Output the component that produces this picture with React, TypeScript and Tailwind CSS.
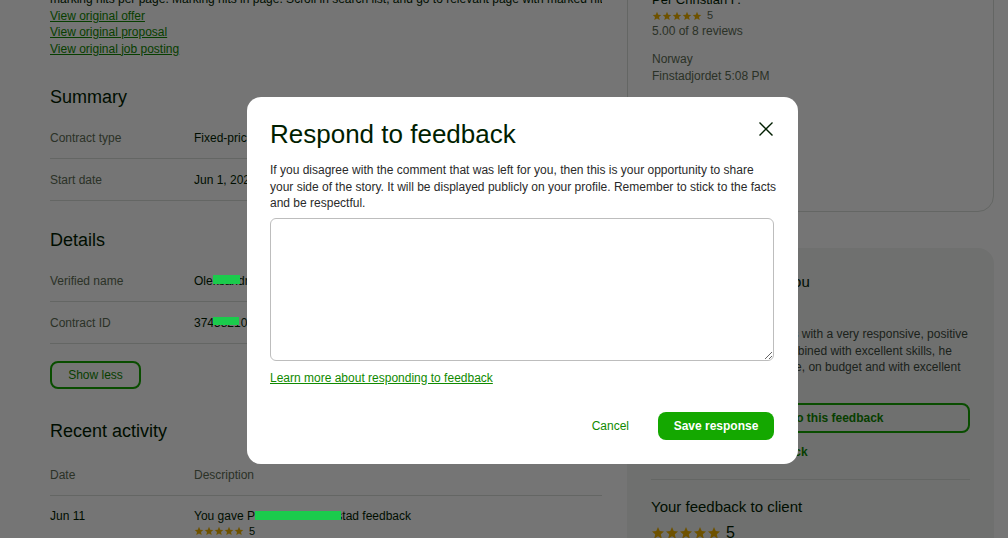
function Star({ size }: { size: number }) {
  return (
    <svg width={size} height={size} viewBox="0 0 24 24" className="shrink-0">
      <path d="M12 1.8l3 6.9 7.3.7-5.5 4.9 1.7 7.2L12 17.7l-6.5 3.8 1.7-7.2L1.7 9.4 9 8.7z" fill="currentColor" />
    </svg>
  )
}

function Stars({ size, score, textClass }: { size: number; score: string; textClass: string }) {
  return (
    <div className="flex items-center gap-[5px]">
      <div className="flex items-center text-[#f0b400]">
        {[0, 1, 2, 3, 4].map(i => (
          <Star key={i} size={size} />
        ))}
      </div>
      <span className={textClass}>{score}</span>
    </div>
  )
}

const rowsSummary = [
  { label: 'Contract type', value: 'Fixed-price' },
  { label: 'Start date', value: 'Jun 1, 2023' },
]

const rowsDetails = [
  { label: 'Verified name', value: 'Oleksandr D.' },
  { label: 'Contract ID', value: '37458210' },
]

function InfoRow({ label, value }: { label: string; value: string }) {
  return (
    <div className="flex h-[42px] items-center border-b border-[#d9ded9] text-[12px]">
      <span className="w-[144px] shrink-0 text-[#5e6d55]">{label}</span>
      <span className="whitespace-nowrap">{value}</span>
    </div>
  )
}

export default function App() {
  return (
    <div className="relative h-[538px] w-[1008px] overflow-hidden bg-white font-['Liberation_Sans',Arial,sans-serif] text-[#001e00]">
      <div className="-mt-[9px] flex gap-[25px] pl-[50px]">
        {/* left column */}
        <main className="w-[552px] shrink-0">
          <p className="overflow-hidden whitespace-nowrap text-[12px] leading-[16.5px]">
            marking hits per page. Marking hits in page. Scroll in search list, and go to relevant page with marked hit.
          </p>
          <div className="flex flex-col items-start text-[12px] leading-[16.5px] text-[#108a00]">
            <a className="underline">View original offer</a>
            <a className="underline">View original proposal</a>
            <a className="underline">View original job posting</a>
          </div>

          <h2 className="mt-[28px] text-[18px] leading-[24px]">Summary</h2>
          <div className="mt-2">
            {rowsSummary.map(r => (
              <InfoRow key={r.label} {...r} />
            ))}
          </div>

          <h2 className="mt-[27px] text-[18px] leading-[24px]">Details</h2>
          <div className="mt-2">
            {rowsDetails.map(r => (
              <InfoRow key={r.label} {...r} />
            ))}
          </div>

          <button className="mt-[17px] h-[28px] w-[91px] rounded-lg border-2 border-[#14a800] text-[12px] text-[#108a00]">
            Show less
          </button>

          <h2 className="mt-[30px] text-[18px] leading-[24px]">Recent activity</h2>
          <div className="mt-3 flex h-[41px] items-center border-b border-[#d9ded9] text-[12px] text-[#5e6d55]">
            <span className="w-[144px] shrink-0">Date</span>
            <span>Description</span>
          </div>
          <div className="flex pt-[12px] text-[12px]">
            <span className="w-[144px] shrink-0 leading-[16px]">Jun 11</span>
            <div>
              <p className="leading-[16px]">You gave Per Christian Finstad feedback</p>
              <div className="flex h-[14px] items-center">
                <Stars size={10} score="5" textClass="text-[11px]" />
              </div>
            </div>
          </div>
        </main>

        {/* right column */}
        <aside className="w-[367px] shrink-0">
          <div className="-mt-[24px] h-[245px] rounded-2xl border border-[#d9ded9] px-6 pt-6">
            <p className="text-[13px] leading-[16.5px]">Per Christian F.</p>
            <div className="flex h-[14px] items-center">
              <Stars size={10} score="5" textClass="text-[11px] text-[#5e6d55]" />
            </div>
            <p className="text-[12px] leading-[16.5px] text-[#5e6d55]">5.00 of 8 reviews</p>
            <div className="mt-3 text-[12px] leading-[16.5px] text-[#5e6d55]">
              <p>Norway</p>
              <p>Finstadjordet 5:08 PM</p>
            </div>
            <div className="mt-[26px] text-[12px] leading-[16.5px] text-[#5e6d55]">
              <p>8 jobs posted</p>
              <p>88% hire rate</p>
              <p className="mt-3">Member since Jan 3, 2019</p>
            </div>
          </div>

          <div className="mt-9 h-[320px] rounded-2xl bg-[#f2f4f2] px-6 pt-[22px]">
            <h3 className="text-[15px] leading-[24px]">Client's feedback to you</h3>
            <div className="mt-2 flex h-[16px] items-center">
              <Stars size={11} score="5.00" textClass="text-[12px]" />
            </div>
            <div className="mt-[8px] whitespace-nowrap text-[12px] leading-[16.5px] text-[#3d4a3d]">
              <p>Oleksandr is fast and works with a very responsive, positive</p>
              <p>and a friendly attitude. Combined with excellent skills, he</p>
              <p>delivered the project on time, on budget and with excellent</p>
              <p>communication.</p>
            </div>
            <button className="mt-[11px] h-[30px] w-full rounded-lg border-2 border-[#14a800] text-[12px] font-semibold text-[#108a00]">
              Respond to this feedback
            </button>
            <a className="mt-[11px] block text-[12px] font-semibold leading-[16px] text-[#108a00]">
              Learn more about feedback
            </a>
            <div className="mt-[19px] border-t border-[#d9ded9] pt-[15px]">
              <h3 className="text-[15px] leading-[24px]">Your feedback to client</h3>
              <div className="mt-[7px] flex h-[14px] items-center">
                <Stars size={14} score="5" textClass="text-[16px]" />
              </div>
            </div>
          </div>
        </aside>
      </div>

      {/* backdrop */}
      <div className="absolute inset-0 bg-black/[0.54]" />

      {/* redaction marks */}
      <div className="absolute left-[213px] top-[275px] h-[9px] w-[27px] bg-[#1bcb4c]" />
      <div className="absolute left-[213px] top-[317px] h-[8px] w-[26px] bg-[#1bcb4c]" />
      <div className="absolute left-[255px] top-[511px] h-[9px] w-[86px] bg-[#1bcb4c]" />

      {/* modal */}
      <div className="absolute left-[247px] top-[97px] w-[551px] rounded-[14px] bg-white pb-[24px] pl-[23px] pr-[24px] pt-[21px]">
        <div className="flex items-start justify-between">
          <h2 className="text-[26px] leading-[32px]">Respond to feedback</h2>
          <button className="mt-[3px]" aria-label="Close">
            <svg width="16" height="16" viewBox="0 0 16 16">
              <path d="M1.5 1.5l13 13M14.5 1.5l-13 13" stroke="#001e00" strokeWidth="1.4" fill="none" />
            </svg>
          </button>
        </div>
        <p className="mt-[12px] w-[510px] text-[12px] leading-[16.5px] text-[#2a2a2a]">
          If you disagree with the comment that was left for you, then this is your opportunity to share your side of
          the story. It will be displayed publicly on your profile. Remember to stick to the facts and be respectful.
        </p>
        <textarea className="mt-[6px] block h-[143px] w-full rounded-[6px] border border-[#bdbdbd] bg-white p-2 text-[12px]" />
        <a className="mt-[9px] block w-fit text-[12px] leading-[16px] text-[#108a00] underline">
          Learn more about responding to feedback
        </a>
        <div className="mt-[26px] flex items-center justify-end gap-[29px]">
          <button className="text-[12px] text-[#108a00]">Cancel</button>
          <button className="h-[28px] w-[116px] rounded-lg bg-[#14a800] text-[12px] font-bold text-white">
            Save response
          </button>
        </div>
      </div>
    </div>
  )
}
